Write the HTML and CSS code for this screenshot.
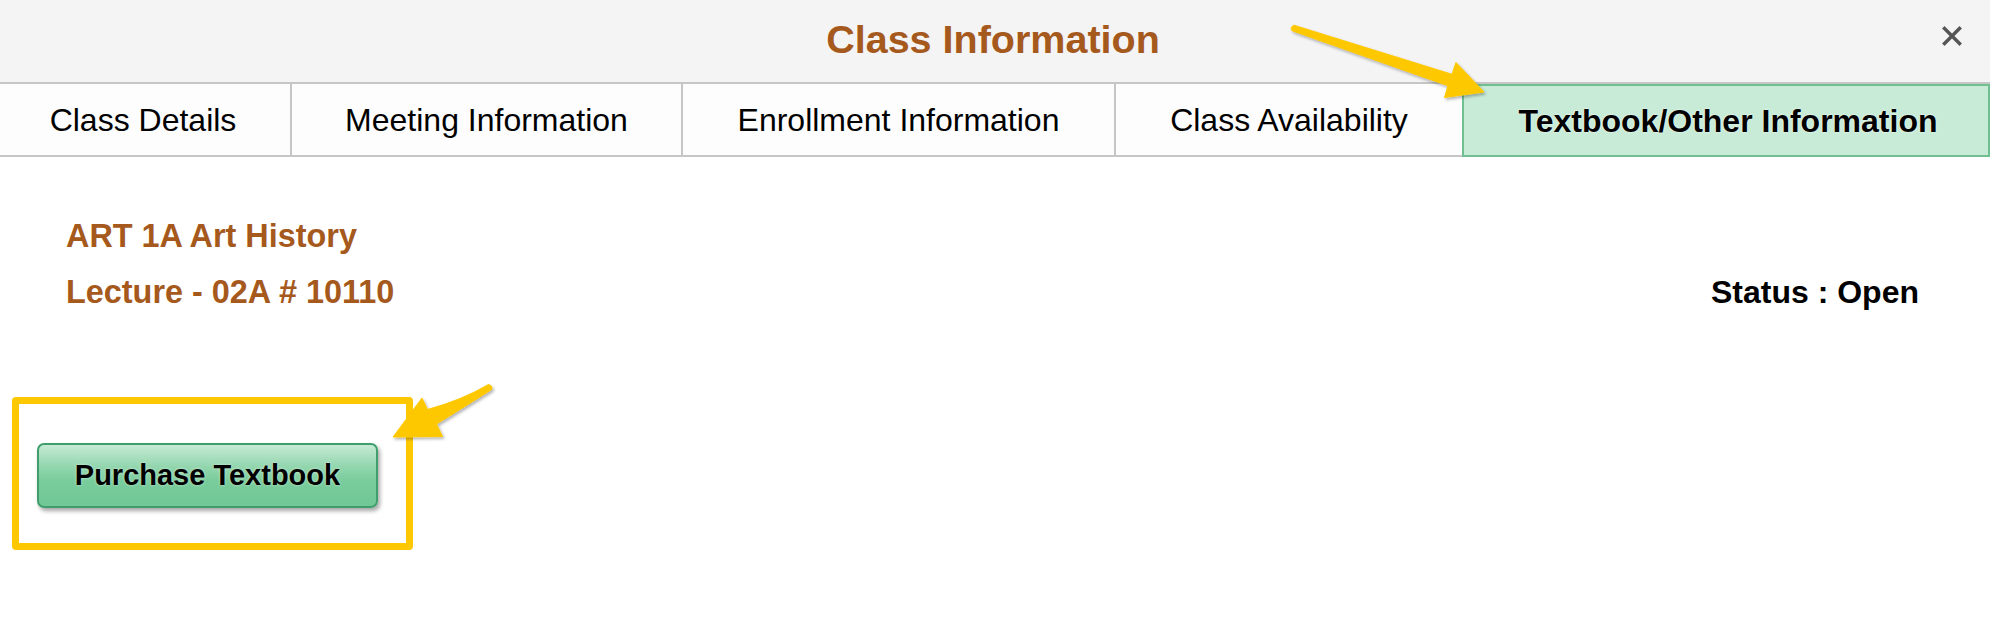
FILE: index.html
```html
<!DOCTYPE html>
<html lang="en">
<head>
<meta charset="utf-8">
<title>Class Information</title>
<link rel="stylesheet" href="styles.css">
</head>
<body>
<div class="page">
  <header class="header">
    <div class="spacer"></div>
    <h1 class="title">Class Information</h1>
    <div class="close-wrap">
      <svg class="close" width="20" height="20" viewBox="0 0 20 20" aria-label="Close">
        <path d="M2.5 2.5 L17.5 17.5 M17.5 2.5 L2.5 17.5" stroke="#555" stroke-width="3.4" stroke-linecap="square" fill="none"/>
      </svg>
    </div>
  </header>
  <nav class="tabs">
    <div class="tab">Class Details</div>
    <div class="tab">Meeting Information</div>
    <div class="tab">Enrollment Information</div>
    <div class="tab">Class Availability</div>
    <div class="tab active">Textbook/Other Information</div>
  </nav>
  <section class="info">
    <div class="row"><span class="course">ART 1A Art History</span></div>
    <div class="row"><span class="course">Lecture - 02A # 10110</span><span class="status">Status : Open</span></div>
  </section>
  <section class="actions">
    <div class="highlight">
      <button class="buy">Purchase Textbook</button>
    </div>
  </section>
  <svg class="arrows" width="1990" height="621" viewBox="0 0 1990 621">
    <defs>
      <filter id="sh" x="-20%" y="-20%" width="140%" height="140%">
        <feDropShadow dx="1.5" dy="2" stdDeviation="1.5" flood-color="#000" flood-opacity="0.3"/>
      </filter>
    </defs>
    <path filter="url(#sh)" fill="#fec800" stroke="#fec800" stroke-width="1" stroke-linejoin="round"
      d="M1293.8 25.2 L1452 74.3 L1456 62.5 L1484 92 L1444.5 97.5 L1448 85.8 L1292.2 30.8 Q1289.5 27.5 1293.8 25.2 Z"/>
    <path filter="url(#sh)" fill="#fec800" stroke="#fec800" stroke-width="1" stroke-linejoin="round"
      d="M488.5 384.5 Q462 400 427.5 409.5 L422 398 L393 437 L442.5 436.5 L436.5 424 Q466 406 491.5 389.5 Q493.5 386 488.5 384.5 Z"/>
  </svg>
</div>
</body>
</html>
```

FILE: styles.css
```css
html, body {
  margin: 0;
  padding: 0;
  background: #ffffff;
}

body {
  font-family: "Liberation Sans", Arial, Helvetica, sans-serif;
  color: #000;
  width: 1990px;
  height: 621px;
  overflow: hidden;
}

.page {
  position: relative;
  width: 1990px;
  height: 621px;
}

.header {
  height: 82px;
  background: #f4f4f4;
  border-bottom: 2px solid #c6c6c6;
  display: grid;
  grid-template-columns: 1fr auto 1fr;
  align-items: center;
}

.title {
  margin: 0;
  font-size: 39.5px;
  font-weight: bold;
  color: #a5591d;
  line-height: 1;
  padding-bottom: 3px;
  padding-right: 4px;
}

.close-wrap {
  display: flex;
  justify-content: flex-end;
  padding-right: 28px;
  padding-bottom: 10px;
}

.close {
  display: block;
}

.tabs {
  display: grid;
  grid-template-columns: 290px 391px 433px 348px 1fr;
  height: 71px;
  border-bottom: 2px solid #c6c6c6;
  background: #fdfdfd;
}

.tab {
  display: flex;
  align-items: center;
  justify-content: center;
  font-size: 32px;
  padding-top: 2px;
  box-sizing: border-box;
}

.tab:first-child {
  padding-right: 4px;
}

.tab + .tab {
  border-left: 2px solid #c6c6c6;
}

.tab.active {
  background: #c8ebd7;
  font-weight: bold;
  border: 2px solid #6fbf90;
  margin-bottom: -2px;
  text-shadow: 0 0 2px #ffffff;
  padding-left: 4px;
}

.info {
  padding: 51px 71px 0 66px;
}

.row {
  display: flex;
  justify-content: space-between;
  align-items: center;
  height: 56px;
}

.course {
  font-size: 32.4px;
  font-weight: bold;
  color: #a5591d;
}

.status {
  font-size: 32px;
  font-weight: bold;
  color: #000;
}

.actions {
  padding: 77px 0 0 12px;
}

.highlight {
  width: 401px;
  height: 153px;
  box-sizing: border-box;
  border: 7px solid #fec800;
  border-radius: 4px;
  padding: 39px 0 0 18px;
}

.buy {
  width: 341px;
  height: 65px;
  box-sizing: border-box;
  border: 2px solid #3f9e6c;
  border-radius: 7px;
  background: linear-gradient(to bottom, #c6ead4 0%, #93d6ae 35%, #78cc9b 60%, #72c796 100%);
  box-shadow: 2px 3px 4px rgba(0, 0, 0, 0.35);
  font-family: "Liberation Sans", Arial, Helvetica, sans-serif;
  font-size: 29px;
  font-weight: bold;
  color: #000;
  text-shadow: 0 0 3px rgba(255, 255, 255, 0.6);
  padding: 0;
  cursor: pointer;
}

.arrows {
  position: absolute;
  left: 0;
  top: 0;
  pointer-events: none;
}
```
